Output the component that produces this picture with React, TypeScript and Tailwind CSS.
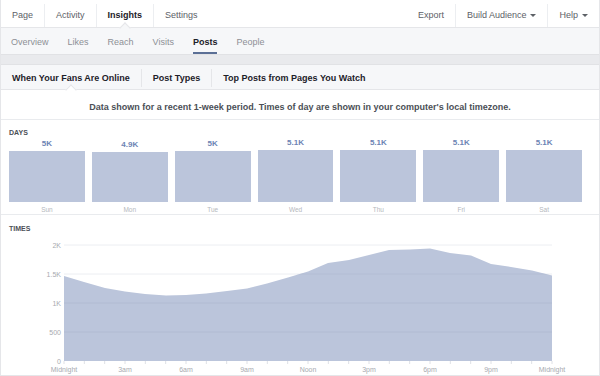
import React from "react";

const days = [
  { v: "5K", d: "Sun", h: 51 },
  { v: "4.9K", d: "Mon", h: 50 },
  { v: "5K", d: "Tue", h: 51 },
  { v: "5.1K", d: "Wed", h: 52 },
  { v: "5.1K", d: "Thu", h: 52 },
  { v: "5.1K", d: "Fri", h: 52 },
  { v: "5.1K", d: "Sat", h: 52 },
];

const pts: [number, number][] = [
  [63, 277], [83, 283], [104, 289], [124, 292.5], [144, 295], [165, 296.5], [185, 296],
  [205, 294.5], [226, 292], [246, 289.5], [266, 284.5], [287, 278.5], [307, 272.5],
  [327, 264], [348, 261], [368, 256], [388, 251], [409, 250.5], [429, 249.5], [449, 254],
  [470, 256.5], [490, 265], [510, 268], [531, 271.5], [551, 276.5],
];

const Sep = () => <div className="w-px h-[18px] bg-[#e5e6e9]" />;
const NavSep = () => <div className="w-px h-[23px] self-end bg-[#eceef1]" />;
const Caret = () => (
  <span className="inline-block ml-[4px] w-0 h-0 border-x-[3px] border-x-transparent border-t-[3px] border-t-[#5d6167] align-middle" />
);

function TimesChart() {
  const Y0 = 236;
  const line = pts.map((p) => `${p[0]},${p[1]}`).join(" L");
  const area = `M63,362 L${line} L551,362 Z`;
  const xl = ["Midnight", "3am", "6am", "9am", "Noon", "3pm", "6pm", "9pm", "Midnight"];
  const yl: [string, number][] = [["2K", 246], ["1.5K", 275], ["1K", 304], ["500", 333], ["0", 362]];
  return (
    <svg width={598} height={139} className="block">
      <g transform={`translate(0,${-Y0})`} fontFamily="'Liberation Sans', Arial, sans-serif">
        <line x1={63} x2={551} y1={246} y2={246} stroke="#eceef2" strokeWidth={1} />
        <line x1={63} x2={551} y1={275} y2={275} stroke="#eceef2" strokeWidth={1} />
        <path d={area} fill="#bbc5db" />
        {[275, 304, 333].map((y) => (
          <line key={y} x1={63} x2={551} y1={y} y2={y} stroke="#a9b4cc" strokeWidth={0.8} opacity={0.6} clipPath="url(#fillclip)" />
        ))}
        <defs>
          <clipPath id="fillclip">
            <path d={area} />
          </clipPath>
        </defs>
        {Array.from({ length: 25 }).map((_, i) => {
          const x = 63 + (488 / 24) * i;
          return <line key={i} x1={x} x2={x} y1={362} y2={365} stroke="#d5d8de" strokeWidth={0.8} />;
        })}
        {yl.map(([t, y]) => (
          <text key={t} x={60} y={y + 2.5} fontSize={7} fill="#a7aab0" textAnchor="end">
            {t}
          </text>
        ))}
        {xl.map((t, i) => (
          <text key={i} x={63 + 61 * i} y={373} fontSize={7} fill="#a7aab0" textAnchor="middle">
            {t}
          </text>
        ))}
      </g>
    </svg>
  );
}

export default function App() {
  return (
    <div
      className="w-[600px] h-[376px] bg-white overflow-hidden border-x border-b border-[#e5e6e9] flex flex-col"
      style={{ fontFamily: "'Liberation Sans', Arial, sans-serif" }}
    >
      {/* top nav */}
      <div className="h-[28px] shrink-0 flex items-stretch justify-between border-b border-[#e5e6e9] text-[9px] text-[#5d6167]">
        <div className="flex items-stretch">
          <div className="px-[11px] pt-[4px] flex items-center">Page</div>
          <NavSep />
          <div className="px-[11px] pt-[4px] flex items-center">Activity</div>
          <NavSep />
          <div className="px-[11px] pt-[4px] flex items-center font-bold text-[#1d2129] relative">
            Insights
            <div className="absolute left-1/2 -ml-[4px] bottom-[-5px] w-[8px] h-[8px] rotate-45 bg-[#f6f7f9] border-l border-t border-[#e5e6e9]" />
          </div>
          <NavSep />
          <div className="px-[11px] pt-[4px] flex items-center">Settings</div>
        </div>
        <div className="flex items-stretch">
          <div className="px-[11px] pt-[4px] flex items-center">Export</div>
          <NavSep />
          <div className="px-[11px] pt-[4px] flex items-center">
            Build Audience
            <Caret />
          </div>
          <NavSep />
          <div className="px-[11px] pt-[4px] flex items-center">
            Help
            <Caret />
          </div>
        </div>
      </div>

      {/* second nav */}
      <div className="h-[26px] shrink-0 bg-[#f6f7f9] flex items-stretch pl-[10px] gap-[19px] text-[9px] text-[#8d9096]">
        <div className="flex items-center pt-[3px]">Overview</div>
        <div className="flex items-center pt-[3px]">Likes</div>
        <div className="flex items-center pt-[3px]">Reach</div>
        <div className="flex items-center pt-[3px]">Visits</div>
        <div className="flex items-center pt-[3px] font-bold text-[#1d2129] relative">
          Posts
          <div className="absolute left-0 right-0 bottom-0 h-[2px] bg-[#5b6f96]" />
        </div>
        <div className="flex items-center pt-[3px]">People</div>
      </div>

      {/* gray band */}
      <div className="h-[11px] shrink-0 bg-[#e9eaed] border-y border-[#e1e2e5]" />

      {/* tabs */}
      <div className="h-[25px] shrink-0 bg-[#f6f7f9] border-b border-[#e5e6e9] flex items-stretch text-[9px] font-bold text-[#1d2129]">
        <div className="px-[11px] pt-[3px] relative flex items-center">
          When Your Fans Are Online
          <div className="absolute left-1/2 -ml-[4px] bottom-[-5px] w-[8px] h-[8px] rotate-45 bg-white border-l border-t border-[#e5e6e9]" />
        </div>
        <div className="self-center mt-[2px]"><Sep /></div>
        <div className="px-[11px] pt-[3px] flex items-center">Post Types</div>
        <div className="self-center mt-[2px]"><Sep /></div>
        <div className="px-[11px] pt-[3px] flex items-center">Top Posts from Pages You Watch</div>
      </div>

      {/* message */}
      <div className="h-[30px] shrink-0 pt-[6px] border-b border-[#e9ebee] flex items-center justify-center text-[9px] font-bold text-[#4b4f56]">
        Data shown for a recent 1-week period. Times of day are shown in your computer's local timezone.
      </div>

      {/* days */}
      <div className="h-[95px] shrink-0 border-b border-[#e9ebee] pt-[8px] pl-[8px] pr-[17px] flex flex-col">
        <div className="text-[7px] leading-[9px] font-bold text-[#4b4f56]">DAYS</div>
        <div className="flex gap-[7px]">
          {days.map((d) => (
            <div key={d.d} className="flex-1 flex flex-col items-stretch">
              <div className="h-[65px] flex flex-col justify-end items-center">
                <div className="text-[8px] leading-[10px] font-bold text-[#6d84b4] mb-[2px]">{d.v}</div>
                <div className="w-full bg-[#bbc5db]" style={{ height: d.h }} />
              </div>
              <div className="mt-[4px] text-[6.5px] leading-[8px] text-center text-[#b5b8bd]">{d.d}</div>
            </div>
          ))}
        </div>
      </div>

      {/* times */}
      <div className="flex-1 pt-[9px] flex flex-col">
        <div className="pl-[8px] text-[7px] leading-[9px] font-bold text-[#4b4f56]">TIMES</div>
        <div className="mt-[2px]">
          <TimesChart />
        </div>
      </div>
    </div>
  );
}
